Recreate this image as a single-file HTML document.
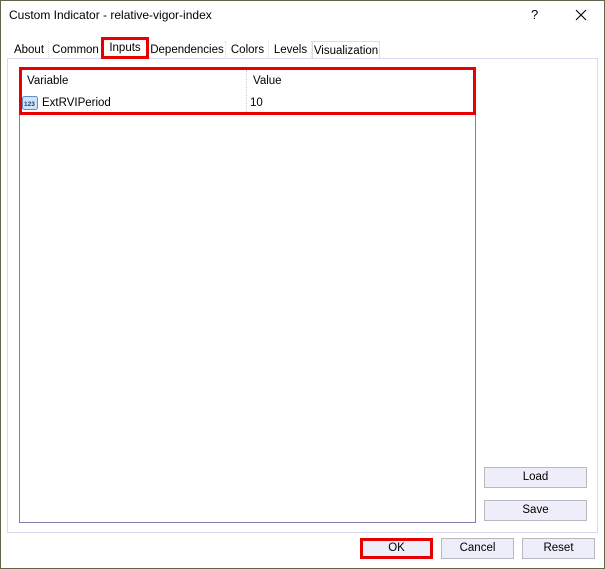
<!DOCTYPE html>
<html><head><style>
*{margin:0;padding:0;box-sizing:border-box}
body{width:605px;height:569px;background:#fff;font-family:"Liberation Sans",sans-serif;font-size:11.5px;color:#000;position:relative;overflow:hidden}
.a{position:absolute}
.win{left:0;top:0;width:605px;height:569px;border:1px solid #62654a;border-top:none}
.tab{top:41px;height:18px;line-height:18px;text-align:center;border-right:1px dotted #ddd}
.btn{background:#eeeefa;border:1px solid #b8b8c0;text-align:center;height:21px;line-height:19px}
</style></head><body>
<div class="a win"></div>
<div class="a" style="left:0;top:0;width:605px;height:1px;background:#62654a"></div>
<div class="a" style="left:9px;top:8px;font-size:12px">Custom Indicator - relative-vigor-index</div>
<div class="a" style="left:531px;top:7px;font-size:13px">?</div>
<svg class="a" style="left:575px;top:9px" width="12" height="12"><path d="M1 1L11 11M11 1L1 11" stroke="#000" stroke-width="1.1"/></svg>
<div class="a" style="left:7px;top:58px;width:591px;height:475px;border:1px solid #dcd8f4"></div>
<div class="a tab" style="left:10px;width:39px">About</div>
<div class="a tab" style="left:50px;width:52px">Common</div>
<div class="a tab" style="left:149px;width:77px">Dependencies</div>
<div class="a tab" style="left:227px;width:42px">Colors</div>
<div class="a tab" style="left:270px;width:42px">Levels</div>
<div class="a tab" style="left:312px;width:68px;border:1px solid #ddd;border-bottom:none">Visualization</div>
<div class="a" style="left:101px;top:37px;width:48px;height:22px;border:3px solid #e80000;text-align:center;line-height:16px;background:#fff">Inputs</div>
<div class="a" style="left:19px;top:68px;width:457px;height:455px;border:1px solid #8080b0"></div>
<div class="a" style="left:246px;top:70px;width:1px;height:44px;border-left:1px dotted #ccc"></div>
<div class="a" style="left:27px;top:75px">Variable</div>
<div class="a" style="left:253px;top:75px">Value</div>
<svg class="a" style="left:22px;top:96px" width="16" height="14"><rect x="0.5" y="0.5" width="15" height="13" rx="2" fill="#cfe4f7" stroke="#5c8fc5"/><text x="2" y="10" font-size="6.5" font-family="Liberation Sans" fill="#1a3f80" font-weight="bold">123</text></svg>
<div class="a" style="left:42px;top:97px">ExtRVIPeriod</div>
<div class="a" style="left:250px;top:97px">10</div>
<div class="a" style="left:19px;top:67px;width:457px;height:48px;border:3px solid #e80000"></div>
<div class="a btn" style="left:484px;top:467px;width:103px">Load</div>
<div class="a btn" style="left:484px;top:500px;width:103px">Save</div>
<div class="a btn" style="left:360px;top:538px;width:73px;border:3px solid #e80000;line-height:15px">OK</div>
<div class="a btn" style="left:441px;top:538px;width:73px">Cancel</div>
<div class="a btn" style="left:522px;top:538px;width:73px">Reset</div>
</body></html>
